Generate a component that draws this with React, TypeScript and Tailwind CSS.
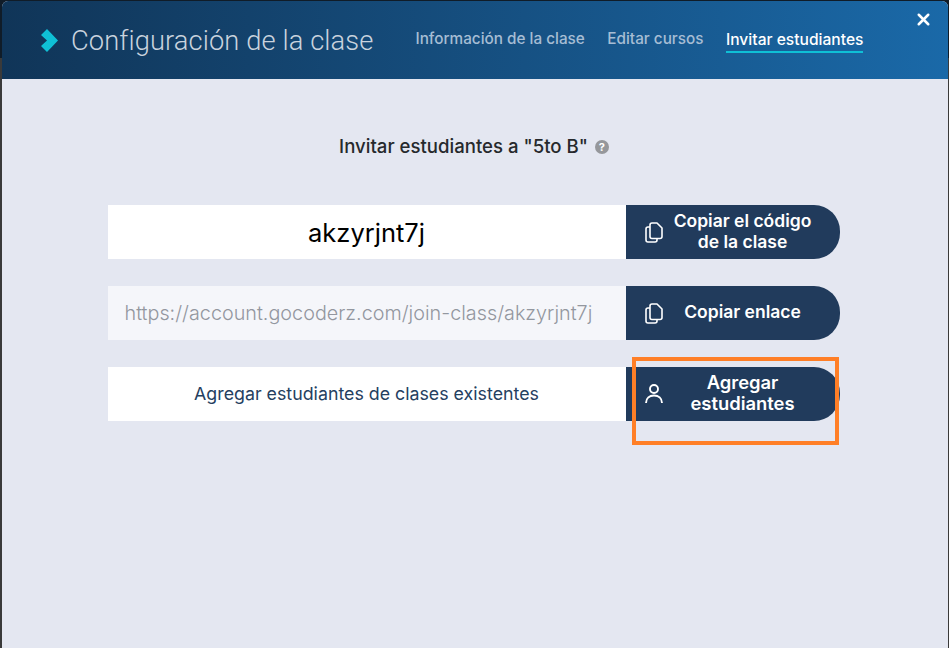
import { X } from 'lucide-react';

const rows = [
  { field: 'akzyrjnt7j', fieldClass: 'bg-white text-[25.5px] text-black font-normal justify-center pt-[3px]', label: ['Copiar el código', 'de la clase'], labelClass: 'text-[17.5px]', icon: 'copy' },
  { field: 'https://account.gocoderz.com/join-class/akzyrjnt7j', fieldClass: 'bg-[#f5f6fa] text-[19.8px] text-[#93979f] font-light justify-start pl-[17px] pt-[1px]', label: ['Copiar enlace'], labelClass: 'text-[17.5px]', icon: 'copy' },
  { field: 'Agregar estudiantes de clases existentes', fieldClass: 'bg-white text-[17.8px] text-[#25405f] font-normal justify-center', label: ['Agregar', 'estudiantes'], labelClass: 'text-[18.4px]', icon: 'user' },
];

function CopyIcon() {
  return (
    <svg width="18" height="21" viewBox="0 0 18 21" fill="none" stroke="white" strokeWidth="1.6" strokeLinejoin="round" className="absolute left-[19px] top-[17px]">
      <path d="M5 14.5 V3 a2 2 0 0 1 2-2 h5 l5 5 v8.5 a2 2 0 0 1-2 2 H7 a2 2 0 0 1-2-2 Z" />
      <path d="M5 5 H3 a2 2 0 0 0-2 2 v11 a2 2 0 0 0 2 2 h7 a2 2 0 0 0 2-2 v-1.5" />
    </svg>
  );
}

function UserIcon() {
  return (
    <svg width="18" height="20" viewBox="0 0 18 20" fill="none" stroke="white" strokeWidth="1.9" className="absolute left-[19px] top-[17px]">
      <circle cx="9" cy="5" r="4" />
      <path d="M1 19 C1 14 4.5 11.5 9 11.5 S17 14 17 19" />
    </svg>
  );
}

export default function App() {
  return (
    <div className="w-[949px] h-[648px] overflow-hidden bg-[linear-gradient(#101c28_58px,#3a3a3a_58px)] pl-[2px] pr-[1px] pt-[1px] font-['Inter',sans-serif]">
      <div className="h-full rounded-t-[6px] overflow-hidden flex flex-col bg-[#e4e7f1]">
        {/* Header */}
        <header className="relative h-[78px] shrink-0 flex items-center bg-gradient-to-r from-[#103558] to-[#1a69a8] pl-[39px]">
          <svg width="17" height="23" viewBox="0 0 17 23" className="shrink-0">
            <path d="M0 6 L6 0 L17 11.5 L6 23 L0 17 L6 11.5 Z" fill="#0fc0d6" />
          </svg>
          <h1 className="ml-[13px] pt-[3px] text-[27.3px] leading-none font-light text-[#c9d3de] font-['Roboto',sans-serif] tracking-[0.1px]">
            Configuración de la clase
          </h1>
          <nav className="ml-[42px] flex gap-[22.5px] text-[15.3px] font-medium mb-[1px]">
            <a className="text-[#a6bdd4]">Información de la clase</a>
            <a className="text-[#a6bdd4]">Editar cursos</a>
            <a className="text-white text-[15.6px] border-b-2 border-[#0fc0d6] -mb-[2px]">Invitar estudiantes</a>
          </nav>
          <X className="absolute right-[15px] top-[9px] text-white" size={19} strokeWidth={3.2} />
        </header>

        {/* Body */}
        <main className="flex-1 flex flex-col items-center">
          <div className="mt-[54px] mr-[2px] flex items-center gap-[7px] text-[18.6px] font-medium text-[#26292c]">
            <span>Invitar estudiantes a "5to B"</span>
            <span className="w-[14px] h-[14px] rounded-full bg-[#95979b] text-white text-[11px] font-bold flex items-center justify-center">?</span>
          </div>

          <div className="mt-[44px] ml-[-3px] flex flex-col gap-[27px]">
            {rows.map((row) => (
              <div key={row.field} className="flex w-[732px] h-[54px]">
                <div className={`w-[518px] flex items-center ${row.fieldClass}`}>
                  {row.field}
                </div>
                <button className={`relative flex-1 rounded-r-[26px] bg-[#213b5c] text-white leading-[21px] font-semibold ${row.labelClass}`}>
                  {row.icon === 'copy' ? <CopyIcon /> : <UserIcon />}
                  <span className="block pl-[20px] pb-[2px] text-center">
                    {row.label.map((line) => (
                      <span key={line} className="block">{line}</span>
                    ))}
                  </span>
                </button>
              </div>
            ))}
          </div>
        </main>
      </div>

      {/* Annotation */}
      <div className="absolute left-[632px] top-[357px] w-[207px] h-[88px] border-[4px] border-[#ff7f27]" />
    </div>
  );
}
